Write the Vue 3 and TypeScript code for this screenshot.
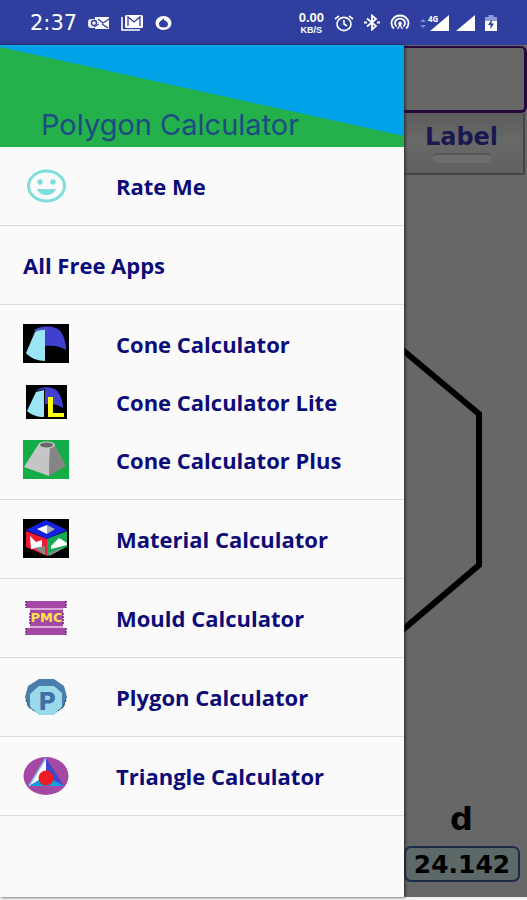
<script setup lang="ts">
interface Entry {
  label: string
  icon?: string
}

const groups: Entry[][] = [
  [{ label: 'Rate Me', icon: 'smile' }],
  [{ label: 'All Free Apps' }],
  [
    { label: 'Cone Calculator', icon: 'cone' },
    { label: 'Cone Calculator Lite', icon: 'lite' },
    { label: 'Cone Calculator Plus', icon: 'plus' },
  ],
  [{ label: 'Material Calculator', icon: 'material' }],
  [{ label: 'Mould Calculator', icon: 'mould' }],
  [{ label: 'Plygon Calculator', icon: 'polygon' }],
  [{ label: 'Triangle Calculator', icon: 'triangle' }],
]
</script>

<template>
  <div class="screen">
    <header class="status">
      <div class="status-side notices">
        <time class="clock">2:37</time>
        <svg class="s-icon" width="22" height="16" viewBox="0 0 22 16">
          <path d="M7 2h14v12H7z" fill="#fff" />
          <path d="M10 4l5 4 6-4M14 9l6 4" fill="none" stroke="#303f9f" stroke-width="1.4" />
          <rect x="0" y="4" width="11" height="9" rx="3" fill="#e8eaf8" />
          <circle cx="6" cy="8" r="2.5" fill="none" stroke="#303f9f" stroke-width="1.3" />
          <path d="M6 12l5-3" stroke="#303f9f" />
        </svg>
        <svg class="s-icon" width="23" height="17" viewBox="0 0 23 17">
          <path d="M1 3v13h18" fill="none" stroke="#fff" stroke-width="1.6" />
          <rect x="4" y="1" width="18" height="13" rx="1.5" fill="#fff" />
          <path d="M7 12V3l6 5 6-5v9" fill="none" stroke="#303f9f" stroke-width="1.3" />
        </svg>
        <svg class="s-icon" width="17" height="16" viewBox="0 0 17 16">
          <ellipse cx="8.5" cy="8" rx="8" ry="7" fill="#fff" />
          <path d="M9 3c-1 2-5 3-5 6a4.5 3.5 0 0 0 9 0c0-2-2-3-4-4z" fill="#303f9f" />
        </svg>
      </div>
      <div class="status-side">
        <div class="speed"><span>0.00</span><small>KB/S</small></div>
        <svg class="s-icon" width="20" height="18" viewBox="0 0 20 18" fill="none" stroke="#fff" stroke-width="1.6">
          <ellipse cx="10" cy="10" rx="7" ry="6.6" />
          <path d="M10 6v4l3 2M1 5l4-3M19 5l-4-3" />
        </svg>
        <svg class="s-icon" width="16" height="17" viewBox="0 0 16 17" fill="none" stroke="#fff" stroke-width="1.8">
          <path d="M3 4.5l9 7.5-4 3.5v-14l4 3.5-9 7.5" />
          <path d="M0 8.5h3M13 8.5h3" stroke-width="2" />
        </svg>
        <svg class="s-icon" width="20" height="17" viewBox="0 0 20 17" fill="none" stroke="#fff" stroke-width="1.8">
          <path d="M4 14.5a8.5 7.6 0 1 1 12 0M6.6 12.5a5 4.6 0 1 1 6.8 0" />
          <circle cx="10" cy="9.5" r="1.9" fill="#fff" stroke="none" />
          <path d="M7.5 15l2.5-4 2.5 4" stroke-width="1.3" />
        </svg>
        <div class="signals">
          <svg class="s-icon" width="30" height="18" viewBox="0 0 30 18">
            <path d="M0 8l3-3 3 3zM0 11l3 3 3-3z" fill="#7d89d2" />
            <path d="M29 1v16H10z" fill="#fff" />
            <text x="8" y="8" class="net">4G</text>
          </svg>
          <svg class="s-icon" width="19" height="18" viewBox="0 0 19 18">
            <path d="M19 1v16H0z" fill="#fff" />
          </svg>
        </div>
        <svg class="s-icon" width="12" height="18" viewBox="0 0 12 18">
          <path d="M3.5 1h5v2H12v5H0V3h3.5z" fill="#8f99d8" />
          <path d="M0 7h12v10H0z" fill="#fff" />
          <path d="M7 5L3 11h2.5v4L9 9.5H6.5z" fill="#303f9f" />
        </svg>
      </div>
    </header>

    <div class="body">
      <nav class="drawer">
        <div class="banner">
          <svg class="banner-art" viewBox="0 0 404 102" preserveAspectRatio="none">
            <path d="M0 0h404v102H0z" fill="#24b14c" />
            <path d="M0 0h404v91L0 2z" fill="#00a2e8" />
          </svg>
          <h1>Polygon Calculator</h1>
        </div>
        <ul v-for="(group, g) in groups" :key="g" class="group">
          <li v-for="item in group" :key="item.label">
            <a href="#" class="row">
              <svg v-if="item.icon" class="icon" width="46" height="42" viewBox="0 0 46 42">
                <g v-if="item.icon === 'smile'">
                  <ellipse cx="23.5" cy="21" rx="18" ry="15" fill="none" stroke="#80deda" stroke-width="3" />
                  <circle cx="17" cy="17" r="2.7" fill="#80deda" />
                  <circle cx="30" cy="17" r="2.7" fill="#80deda" />
                  <path d="M14 24h19c-3 8-16 8-19 0z" fill="#80deda" />
                </g>
                <g v-else-if="item.icon === 'cone'">
                  <path d="M0 1h46v39H0z" fill="#000" />
                  <path d="M11 8c4-6 22-6 27 1 3 4 5 11 5 18-6-4-13-5-21-4V7z" fill="#3f3fd0" />
                  <path d="M12 9c3-2 6-2 10-2v31c-7 0-15-3-19-8z" fill="#99e4f5" />
                  <path d="M12 8c3-3 10-2 12-1" fill="none" stroke="#5860ba" />
                </g>
                <g v-else-if="item.icon === 'lite'">
                  <path d="M3 4h41v34H3z" fill="#000" />
                  <path d="M13 10c5-5 18-5 22 1 3 4 5 10 5 16-6-4-11-4-18-4V8z" fill="#3f3fd0" />
                  <path d="M13 11l8-2v27c-7 0-12-2-17-6z" fill="#99e4f5" />
                  <path d="M25 16h5v16h11v4H25z" fill="#ffff12" />
                </g>
                <g v-else-if="item.icon === 'plus'">
                  <path d="M0 1h46v39H0z" fill="#12ad46" />
                  <path d="M15 6L1 28l25 9 1-28z" fill="#c5c5c5" />
                  <path d="M27 9l5-3 11 21-17 10z" fill="#858585" />
                  <ellipse cx="23.5" cy="6" rx="8.5" ry="3.5" fill="#c9c9c9" />
                  <ellipse cx="23.5" cy="6" rx="6.5" ry="2.4" fill="#686868" />
                </g>
                <g v-else-if="item.icon === 'material'">
                  <path d="M0 1h46v39H0z" fill="#000" />
                  <path d="M23 2l21 10-20 9L3 12z" fill="#1321e5" />
                  <path d="M3 13l21 8v17L3 29z" fill="#ed1c33" />
                  <path d="M24 21l20-8v16L24 38z" fill="#18a854" />
                  <path d="M14 11l10-4v9z" fill="#fff" />
                  <path d="M24 7l8 4-8 5z" fill="#aaa" />
                  <path d="M7 18l6 6 6-2v7l-11 2z" fill="#fff" />
                  <path d="M11 30l11-2v9z" fill="#888" />
                  <path d="M28 28l8-8 8 5v2l-16 4z" fill="#fff" />
                  <path d="M26 35l14-6-4 4-10 5z" fill="#888" />
                </g>
                <g v-else-if="item.icon === 'mould'">
                  <path d="M3 4h40v7H3zM3 31h40v7H3zM7 13h33v16H7z" fill="#a349a4" />
                  <path d="M7 12h33M7 30h33" stroke="#dca9dc" stroke-width="2" />
                  <path d="M3 4v7M43 4v7M3 31v7M43 31v7M7 16v12M40 16v12" stroke="#6e2a75" stroke-width="1.5" stroke-dasharray="2 1" />
                  <text x="23.5" y="25" class="pmc">PMC</text>
                </g>
                <g v-else-if="item.icon === 'polygon'">
                  <path d="M16 3h15l10 7 3 11-3 10-10 7H16L5 31 2 21 5 10z" fill="#497ead" />
                  <path d="M16 10h15l8 7v14l-8 8H16l-9-8V18z" fill="#99d9ea" />
                  <path d="M3 24l3 7 7 5M43 24l-3 7-7 5" fill="none" stroke="#153c60" stroke-dasharray="2 2" />
                  <text x="24" y="34" class="p">P</text>
                </g>
                <g v-else>
                  <ellipse cx="23" cy="21" rx="22.5" ry="19" fill="#a349a4" />
                  <path d="M23 3L6 31l17-10z" fill="#fff" />
                  <path d="M23 3l18 28-18-10z" fill="#3f48cc" />
                  <path d="M6 31l17-10 18 10z" fill="#159bde" />
                  <path d="M23 3L6 31" stroke="#88c4ef" stroke-width="1.5" />
                  <circle cx="23" cy="23" r="7.5" fill="#ed1c24" />
                </g>
              </svg>
              <span>{{ item.label }}</span>
            </a>
          </li>
        </ul>
      </nav>

      <main class="page">
        <div class="field"></div>
        <button class="tab" type="button">Label<i></i></button>
        <div class="canvas">
          <svg viewBox="0 0 122 310" width="122" height="310">
            <path d="M-5 12L75 79v151L-5 298" fill="none" stroke="#000" stroke-width="6" />
          </svg>
        </div>
        <label class="name" for="distance">d</label>
        <input id="distance" class="value" value="24.142" readonly />
      </main>
    </div>
  </div>
</template>

<style>
body {
  margin: 0;
  background: #f2f2f2;
}
</style>

<style scoped>
.screen {
  box-sizing: border-box;
  min-height: 100vh;
  padding-bottom: 3px;
  display: flex;
  flex-direction: column;
  font-family: "Open Sans", "Noto Sans", sans-serif;
}
.status {
  height: 45px;
  box-sizing: border-box;
  padding: 0 30px;
  display: flex;
  justify-content: space-between;
  align-items: center;
  background: #303f9f;
  color: #fff;
}
.status-side {
  display: flex;
  align-items: center;
  gap: 10px;
}
.notices {
  gap: 11px;
}
.signals {
  display: flex;
  gap: 6px;
}
.s-icon {
  flex: none;
}
.clock {
  font: 21px/24px "DejaVu Sans", sans-serif;
}
.speed {
  display: flex;
  flex-direction: column;
  align-items: center;
  font: bold 13px/14px "Liberation Sans", sans-serif;
}
.speed small {
  font-size: 9px;
  line-height: 10px;
}
.net {
  font: bold 8px "Open Sans", sans-serif;
  fill: #fff;
}
.body {
  flex: 1;
  display: flex;
}
.drawer {
  flex: 1;
  position: relative;
  z-index: 1;
  background: #fafafa;
  box-shadow: 1px 0 3px #222;
}
.banner {
  height: 102px;
  display: grid;
  overflow: hidden;
}
.banner > * {
  grid-area: 1 / 1;
}
.banner-art {
  width: 100%;
  height: 102px;
}
.banner h1 {
  margin: 0;
  padding: 0 0 2px 41px;
  align-self: end;
  z-index: 1;
  color: #1d4b82;
  font-family: Inter, "Open Sans", sans-serif;
  font-size: 29px;
  line-height: 40px;
  font-weight: 400;
}
.group {
  margin: 0;
  padding: 10px 0;
  list-style: none;
  border-bottom: 1px solid #dcdcdc;
}
.row {
  height: 58px;
  padding: 0 23px;
  display: flex;
  align-items: center;
  gap: 47px;
  color: #0c0c78;
  font-size: 22px;
  line-height: 30px;
  font-weight: 700;
  text-decoration: none;
  white-space: nowrap;
}
.icon {
  flex: none;
}
.pmc {
  font: bold 13px "DejaVu Sans", sans-serif;
  fill: #ffe34d;
  text-anchor: middle;
}
.p {
  font: bold 24px "DejaVu Sans", sans-serif;
  fill: #3f6fa5;
  text-anchor: middle;
}
.page {
  width: 123px;
  display: flex;
  flex-direction: column;
  background: #676767;
  font-family: "DejaVu Sans", sans-serif;
}
.field {
  height: 62px;
  margin-top: 1px;
  border: solid #26083d;
  border-width: 2px 3px 3px 0;
  border-radius: 0 6px 6px 0;
}
.tab {
  height: 62px;
  margin: 0 2px 0 0;
  padding: 0 4px 2px 0;
  display: flex;
  flex-direction: column;
  align-items: center;
  justify-content: center;
  gap: 1px;
  border: solid #454545;
  border-width: 0 2px 2px 0;
  background: linear-gradient(#5d5d5d, #696969 50%, #606060);
  color: #191950;
  font: bold 24px/30px "DejaVu Sans", sans-serif;
}
.tab i {
  width: 58px;
  height: 8px;
  border-top: 2px solid #555;
  border-radius: 4px;
  background: #6d6d6d;
}
.canvas {
  flex: 1;
  padding-top: 160px;
}
.canvas svg {
  display: block;
}
.name {
  padding-right: 8px;
  text-align: center;
  font-size: 32px;
  line-height: 44px;
  font-weight: 700;
}
.value {
  box-sizing: border-box;
  width: 116px;
  height: 36px;
  margin: 5px 0 15px;
  padding: 0;
  border: 2px solid #1b2c4a;
  border-radius: 7px;
  background: #5d6868;
  color: #000;
  text-align: center;
  font: bold 25px/30px "DejaVu Sans", sans-serif;
}
</style>
